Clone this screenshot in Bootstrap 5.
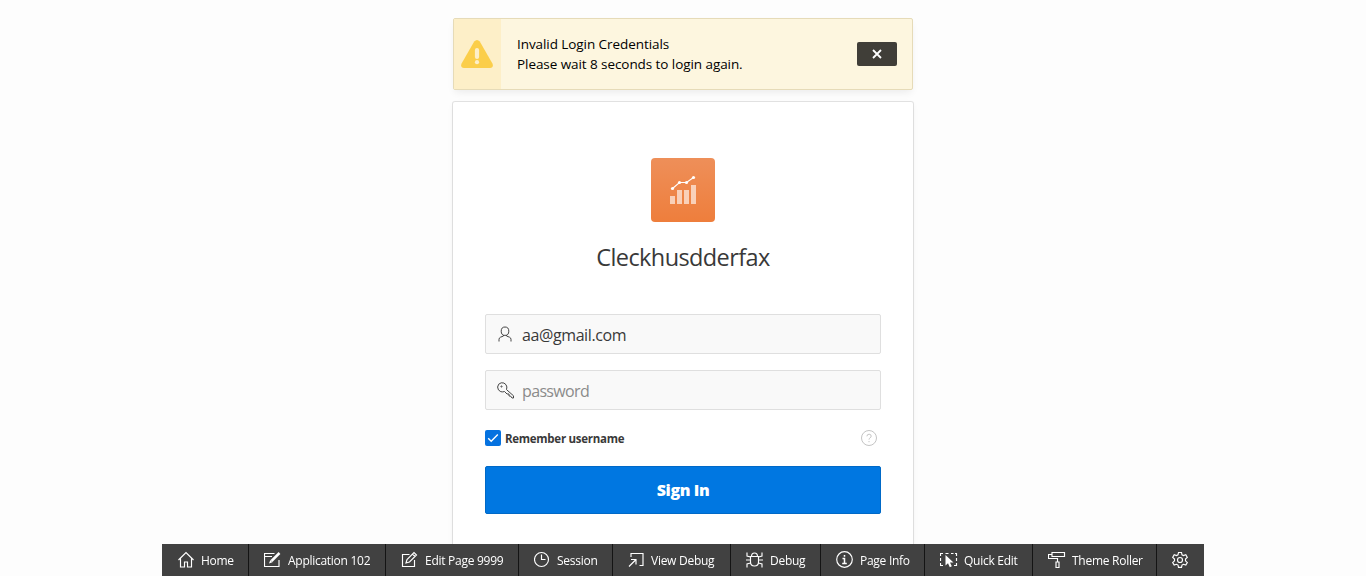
<!DOCTYPE html>
<html lang="en">
<head>
<meta charset="utf-8">
<meta name="viewport" content="width=device-width, initial-scale=1">
<title>Cleckhusdderfax - Log In</title>
<link rel="stylesheet" href="https://cdn.jsdelivr.net/npm/bootstrap@5.3.0/dist/css/bootstrap.min.css">
<style>
body{background:#fdfdfd;font-family:"Open Sans","Noto Sans",sans-serif;height:100vh;overflow:hidden}
svg{display:block;flex:none}
.login-wrap{width:460px}
.notice{height:72px;margin-top:18px;background:#fdf6df;border:1px solid #e6dbb8;border-radius:2px;box-shadow:0 4px 8px -2px rgba(0,0,0,.08);color:#000;font-size:13.5px;line-height:20px;letter-spacing:-.07px}
.notice-icon{width:47px;padding-right:8px;background:#fdefc8}
.notice-close{width:40px;height:24px;background:#403e38;border-radius:2px;margin-right:15px}
.login-card{margin-top:12px;height:444px;padding:56px 32px 32px;background:#fff;border:0;border-radius:2px;box-shadow:0 0 0 1px rgba(0,0,0,.1),0 2px 6px rgba(0,0,0,.05)}
.app-logo{width:64px;height:64px;border-radius:4px;background:linear-gradient(#ee8f59,#ee7e3c)}
.app-name{font-size:23.5px;line-height:32px;margin:19px 0 41px;color:#393939;letter-spacing:-.6px}
.field{height:40px;background:#f9f9f9;border:1px solid #dfdfdf;border-radius:2px;padding:0 11px;gap:8px}
.field .form-control{height:38px;font-size:16px;color:#393939;letter-spacing:-.4px;padding-top:2px!important}
.field .form-control::placeholder{color:#8b8b8b;opacity:1;letter-spacing:-.65px}
.remember{height:16px;margin:20px 0}
.remember-box{width:16px;height:16px;background:#0572e0;border-radius:2px}
.remember label{font-size:11.5px;font-weight:700;color:#393939;letter-spacing:-.28px;line-height:16px;padding-top:2px}
.sign-in{height:48px;background:#0077e1;border:1px solid #0069c7;border-radius:2px;font-size:16px;font-weight:800;letter-spacing:-.4px;color:#fff}
.dev-bar{width:1042px;height:32px;background:rgba(56,56,56,.955);color:#fff;font-size:12px;letter-spacing:-.27px}
.dev-item{border-right:1px solid #141414;padding-left:15px;gap:6px;white-space:nowrap;color:#fff;text-decoration:none;line-height:16px}
.dev-item span{padding-top:2px}
.dev-item:last-child{border:0;padding-left:14px}
.dev-item svg{fill:none;stroke:#fff;stroke-width:1.15}
.w-home{width:87px}.w-app{width:137px}.w-edit{width:133px}.w-session{width:94px}.w-view{width:118px}
.w-debug{width:90px}.w-info{width:104px}.w-quick{width:108px}.w-theme{width:124px}.w-gear{width:47px}
.w-session,.w-view{gap:5px}
</style>
</head>
<body>
<main class="login-wrap mx-auto d-flex flex-column">
  <div class="notice d-flex" role="alert">
    <div class="notice-icon d-flex align-items-center justify-content-end">
      <svg width="32" height="32" viewBox="0 0 32 32"><path d="M13.2 3.6Q16 .4 18.8 3.6L31.4 25.4Q33 29.6 29 30H3Q-1 29.6.6 25.4Z" fill="#fbce4a"/><path d="M16 12v7" stroke="#fdefc8" stroke-width="4.2" stroke-linecap="round"/><circle cx="16" cy="24.2" r="2.1" fill="#fdefc8"/></svg>
    </div>
    <div class="flex-grow-1 d-flex align-items-center ps-3">
      <div>Invalid Login Credentials<br>Please wait 8 seconds to login again.</div>
    </div>
    <button class="notice-close border-0 p-0 align-self-center d-flex align-items-center justify-content-center" aria-label="Close">
      <svg width="10" height="10" viewBox="0 0 10 10"><path d="M1 1l8 8M9 1l-8 8" stroke="#fff" stroke-width="1.8"/></svg>
    </button>
  </div>
  <form class="login-card card">
    <div class="app-logo mx-auto">
      <svg width="64" height="64" viewBox="0 0 64 64"><g fill="#fff" fill-opacity=".62"><path d="M19 38h5v8h-5zM26 32h5v14h-5zM33 32h5v14h-5zM40 27h5v19h-5z"/></g><path d="M21.5 30.5l7-6h7l7-5" fill="none" stroke="#fff" stroke-width="1.1"/><g fill="#fff"><circle cx="21.5" cy="30.5" r="1.6"/><circle cx="28.5" cy="24.5" r="1.6"/><circle cx="35.5" cy="24.5" r="1.6"/><circle cx="42.5" cy="19.5" r="1.6"/></g></svg>
    </div>
    <h1 class="app-name fw-normal text-center">Cleckhusdderfax</h1>
    <div class="field d-flex align-items-center mb-3">
      <svg width="17" height="17" viewBox="0 0 17 17" fill="none" stroke="#454545"><ellipse cx="8" cy="5.2" rx="3.8" ry="4.2"/><path d="M2 15.5v-2q0-1.7 1.5-2.3l3-1.2v-1M14 15.5v-2q0-1.7-1.5-2.3l-3-1.2v-1"/></svg>
      <input class="form-control bg-transparent border-0 p-0 shadow-none" type="text" value="aa@gmail.com" aria-label="username">
    </div>
    <div class="field d-flex align-items-center">
      <svg width="17" height="17" viewBox="0 0 17 17" fill="none" stroke="#454545"><path d="M9.5 7.6Q10.5 4.8 9 2.7 7.2.3 4.2.8 1 1.5.6 5 .7 8.5 3.8 9.7 5.8 10.2 7.5 9.5L10 12H12V14H13.500L15 16H16.500V13.800Z"/><circle cx="4.5" cy="4.5" r=".6"/></svg>
      <input class="form-control bg-transparent border-0 p-0 shadow-none" type="text" placeholder="password" aria-label="password">
    </div>
    <div class="remember d-flex align-items-center">
      <span class="remember-box me-1"><svg width="16" height="16" viewBox="0 0 16 16"><path d="M3.2 8.2l3 3 6.6-6.6" fill="none" stroke="#fff" stroke-width="1.4"/></svg></span>
      <label>Remember username</label>
      <svg class="ms-auto me-1" width="16" height="16" viewBox="0 0 16 16" fill="none" stroke="#c4c4c4"><circle cx="8" cy="8" r="7.5"/><path d="M5.900 6.300q.1-2.100 2.200-2.100 2.100.1 2.100 1.900 0 1.100-1.200 1.800-1 .6-1 1.700M8 11v1.200"/></svg>
    </div>
    <button type="button" class="sign-in w-100 p-0">Sign In</button>
  </form>
</main>
<nav class="dev-bar fixed-bottom mx-auto d-flex">
  <a class="dev-item w-home d-flex align-items-center"><svg width="18" height="18" viewBox="0 0 18 18"><path d="M1.500 9L9 1.500 16.500 9M3.500 7.500V16h4v-5h3v5h4V7.500"/></svg><span>Home</span></a>
  <a class="dev-item w-app d-flex align-items-center"><svg width="18" height="18" viewBox="0 0 18 18"><path d="M10.500 2.500h-10v13h14.500V9M1 5.500h7"/><path d="M7.500 10L15.500 2" stroke-width="2.500"/><path d="M5 12.500l3.500-1.200-2.200-2.200z" fill="#fff" stroke="none"/></svg><span>Application 102</span></a>
  <a class="dev-item w-edit d-flex align-items-center"><svg width="18" height="18" viewBox="0 0 18 18"><path d="M8.500 3.500H1.500v12h12V9"/><path d="M5 12l1-3.500 7-7 2.500 2.500-7 7zM11.500 3L14 5.500"/></svg><span>Edit Page 9999</span></a>
  <a class="dev-item w-session d-flex align-items-center"><svg width="18" height="18" viewBox="0 0 18 18"><circle cx="7.500" cy="8.500" r="7"/><path d="M7.500 3.500v5h4"/></svg><span>Session</span></a>
  <a class="dev-item w-view d-flex align-items-center"><svg width="18" height="18" viewBox="0 0 18 18"><path d="M3 6V2.500h12v12H11.500M1 15.500l7-7M3 8.500h5v5"/></svg><span>View Debug</span></a>
  <a class="dev-item w-debug d-flex align-items-center"><svg width="18" height="18" viewBox="0 0 18 18"><path d="M4.500 5.500h8V11q0 4-4 4t-4-4zM5.500 5.500q0-3.500 3-3.500t3 3.500M4.500 6L1 5V1.500M12.500 6L16 5V1.500M4.500 9H0M12.500 9H17M4.500 12L1 13v3.500M12.500 12l3.500 1v3.500"/></svg><span>Debug</span></a>
  <a class="dev-item w-info d-flex align-items-center"><svg width="18" height="18" viewBox="0 0 18 18"><circle cx="8.500" cy="8.500" r="7.800"/><path d="M6.500 7.500h2v5M6.200 12.500h4.600M8.500 4v1.800" stroke-width="1.500"/></svg><span>Page Info</span></a>
  <a class="dev-item w-quick d-flex align-items-center"><svg width="18" height="18" viewBox="0 0 18 18"><path d="M.500 5V2.500H3M5.500 2.500h3M11 2.500h2.500M15 2.500h1.500V5M16.500 7v3M16.500 12v2.500H14M.500 7v3M.500 12v2.500H3"/><path d="M5.500 4v10.500l2.500-2.300 1.800 4 2-.9-1.800-3.900h3.500z" fill="#fff" stroke="none"/></svg><span>Quick Edit</span></a>
  <a class="dev-item w-theme d-flex align-items-center"><svg width="18" height="18" viewBox="0 0 18 18"><path d="M4 1.500h12.500v4H4zM4 3.500H.500v4h9v3.500M8 11h3v5.500H8z"/></svg><span>Theme Roller</span></a>
  <a class="dev-item w-gear d-flex align-items-center" aria-label="Settings"><svg width="18" height="18" viewBox="0 0 18 18"><path d="M7.500 1.500h3l.5 2.300 1.500.8 2.300-.8 1.500 2.600-1.800 1.700v1.700l1.800 1.700-1.500 2.600-2.300-.8-1.500.8-.5 2.300h-3L7 14.100l-1.500-.8-2.300.8-1.500-2.600 1.800-1.700V8.100L1.700 6.400l1.500-2.600 2.300.8L7 3.800z"/><circle cx="9" cy="9" r="2.500"/></svg></a>
</nav>
<script src="https://cdn.jsdelivr.net/npm/bootstrap@5.3.0/dist/js/bootstrap.bundle.min.js"></script>
</body>
</html>
